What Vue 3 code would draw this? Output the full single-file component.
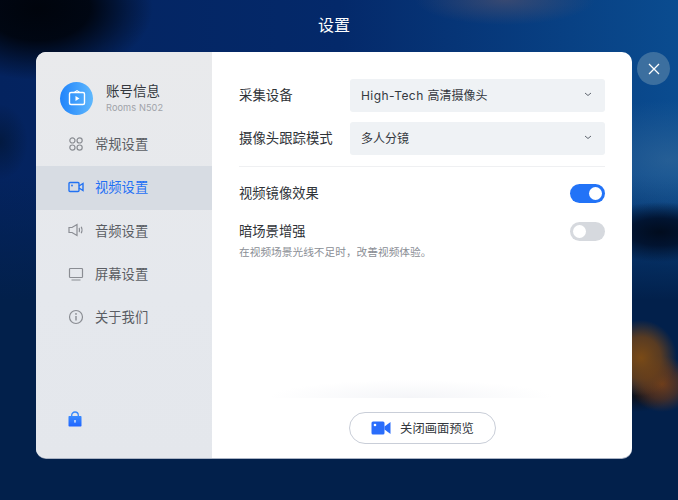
<script setup>
const nav = [
  { key: 'general', label: '常规设置' },
  { key: 'video', label: '视频设置', active: true },
  { key: 'audio', label: '音频设置' },
  { key: 'screen', label: '屏幕设置' },
  { key: 'about', label: '关于我们' }
]
</script>

<template>
  <div class="page">
    <div class="bg"></div>
    <header class="title">设置</header>
    <section class="card">
      <aside class="side">
        <div class="account">
          <div class="avatar">
            <svg width="20" height="20" viewBox="0 0 20 20" fill="none">
              <rect x="2.5" y="4.5" width="15" height="12" rx="1.5" stroke="#fff" stroke-width="1.4" />
              <path d="M7.5 4.2 10 2.6l2.5 1.6" stroke="#fff" stroke-width="1.2" />
              <path d="M8.5 8v5l4-2.5z" fill="#fff" />
            </svg>
          </div>
          <div class="account-text">
            <div class="account-name">账号信息</div>
            <div class="account-sub">Rooms N502</div>
          </div>
        </div>
        <nav class="nav">
          <div v-for="item in nav" :key="item.key" class="nav-item" :class="{ active: item.active }">
            <svg class="nav-icon" width="16" height="16" viewBox="0 0 16 16" fill="none" stroke="currentColor" stroke-width="1.2">
              <template v-if="item.key === 'general'">
                <circle cx="4.4" cy="4.4" r="2.6" />
                <circle cx="11.6" cy="4.4" r="2.6" />
                <circle cx="4.4" cy="11.6" r="2.6" />
                <circle cx="11.6" cy="11.6" r="2.6" />
              </template>
              <template v-else-if="item.key === 'video'">
                <rect x="1" y="3.5" width="10" height="9" rx="1" stroke-width="1.4" />
                <path d="M11 7l4-2.5v7L11 9" stroke-width="1.4" />
                <circle cx="4" cy="6.5" r="0.9" fill="currentColor" stroke="none" />
              </template>
              <template v-else-if="item.key === 'audio'">
                <path d="M1 5.5h3L9 2.5v11L4 10.5H1z" />
                <path d="M11 6c.6.6.6 3.400 0 4M13.200 4.800c1 1.600 1 4.800 0 6.400" />
              </template>
              <template v-else-if="item.key === 'screen'">
                <rect x="1.500" y="2.500" width="13" height="9" rx="0.8" />
                <path d="M3.500 14h9" />
              </template>
              <template v-else>
                <circle cx="8" cy="8" r="6.500" />
                <path d="M8 7v4.500" stroke-width="1.400" />
                <circle cx="8" cy="4.900" r="0.900" fill="currentColor" stroke="none" />
              </template>
            </svg>
            <span>{{ item.label }}</span>
          </div>
        </nav>
        <div class="lock">
          <svg width="14" height="16" viewBox="0 0 14 16">
            <defs>
              <linearGradient id="lockFill" x1="0" y1="0" x2="0" y2="1">
                <stop offset="0" stop-color="#3a8bff" />
                <stop offset="1" stop-color="#1f64ff" />
              </linearGradient>
            </defs>
            <path d="M3.700 6V4.300a3.300 3.300 0 0 1 6.600 0V6" fill="none" stroke="#3588fb" stroke-width="1.300" />
            <rect x="0.500" y="5" width="13" height="10.500" rx="0.800" fill="url(#lockFill)" />
            <rect x="6.400" y="9" width="1.200" height="2.600" fill="#fff" />
          </svg>
        </div>
      </aside>
      <main class="main">
        <div class="form-row">
          <label>采集设备</label>
          <div class="select">
            <span><span class="latin">High-Tech </span>高清摄像头</span>
            <svg width="8" height="5" viewBox="0 0 8 5" fill="none"><path d="M1 1l3 2.500L7 1" stroke="#5f666f" stroke-width="1" /></svg>
          </div>
        </div>
        <div class="form-row second">
          <label>摄像头跟踪模式</label>
          <div class="select">
            <span>多人分镜</span>
            <svg width="8" height="5" viewBox="0 0 8 5" fill="none"><path d="M1 1l3 2.500L7 1" stroke="#5f666f" stroke-width="1" /></svg>
          </div>
        </div>
        <div class="divider"></div>
        <div class="toggle-row">
          <span>视频镜像效果</span>
          <div class="toggle on"><i></i></div>
        </div>
        <div class="toggle-row dark">
          <span>暗场景增强</span>
          <div class="toggle"><i></i></div>
        </div>
        <p class="hint">在视频场景光线不足时，改善视频体验。</p>
        <div class="footer">
          <div class="fade"></div>
          <button class="preview" type="button">
            <svg width="20" height="14" viewBox="0 0 20 14">
              <rect x="0.500" y="0.500" width="13" height="13" rx="1.500" fill="#2a6dfb" />
              <path d="M13.500 5.500 19.500 1v12l-6-4.500z" fill="#2a6dfb" />
              <circle cx="4" cy="4" r="1.300" fill="#fff" />
            </svg>
            <span>关闭画面预览</span>
          </button>
        </div>
      </main>
    </section>
    <button class="close" type="button" aria-label="关闭">
      <svg width="12" height="12" viewBox="0 0 12 12" fill="none"><path d="M1 1l10 10M11 1 1 11" stroke="#fff" stroke-width="1.300" /></svg>
    </button>
  </div>
</template>

<style>
html, body { margin: 0; background: #02204b; }
</style>

<style scoped>
.page {
  position: relative;
  width: 678px;
  height: 500px;
  overflow: hidden;
  font-family: Inter, "Noto Sans CJK SC", sans-serif;
  color: #2b2f36;
}
.bg {
  position: absolute;
  inset: 0;
  background:
    radial-gradient(ellipse 115px 72px at 38px 8px, rgba(0, 4, 12, 1) 0%, rgba(0, 4, 12, .92) 45%, rgba(0, 4, 12, .35) 78%, rgba(0, 4, 12, 0) 100%),
    radial-gradient(ellipse 28px 38px at 0 142px, rgba(2, 18, 40, .55), rgba(2, 18, 40, 0)),
    radial-gradient(ellipse 36px 38px at 641px 358px, rgba(122, 74, 22, 1) 0%, rgba(110, 66, 24, .8) 55%, rgba(105, 62, 24, 0) 100%),
    radial-gradient(ellipse 32px 28px at 662px 384px, rgba(122, 64, 22, .9) 0%, rgba(105, 55, 24, .6) 55%, rgba(105, 55, 24, 0) 100%),
    radial-gradient(ellipse 34px 16px at 636px 396px, rgba(12, 14, 22, .9), rgba(12, 14, 22, 0)),
    radial-gradient(ellipse 70px 30px at 660px 232px, rgba(1, 12, 30, 1) 0%, rgba(1, 16, 42, .9) 45%, rgba(1, 20, 55, 0) 100%),
    radial-gradient(ellipse 110px 60px at 670px 160px, rgba(60, 110, 155, .55), rgba(60, 110, 155, 0)),
    radial-gradient(ellipse 90px 25px at 505px 0, rgba(95, 85, 105, .55), rgba(95, 85, 105, 0)),
    linear-gradient(180deg, rgba(2, 32, 75, 0) 0%, rgba(2, 32, 75, 0) 35%, #02204b 60%, #02204b 100%),
    linear-gradient(90deg, #04235f 0%, #04296a 50%, #0a4c90 100%);
}
.title {
  position: relative;
  height: 52px;
  padding-right: 10px;
  line-height: 51px;
  text-align: center;
  font-size: 16px;
  color: #fff;
}
.card {
  position: relative;
  display: flex;
  width: 596px;
  height: 406px;
  margin-left: 36px;
  border-radius: 10px;
  overflow: hidden;
  background: #fff;
  box-shadow: 0 1px 0 #aab3c4;
}
.side {
  display: flex;
  flex-direction: column;
  flex: 0 0 176px;
  background: linear-gradient(180deg, #e9eaec 0%, #e5e8ed 60%, #e4e7ec 100%);
}
.account {
  display: flex;
  align-items: center;
  height: 71px;
  padding: 19px 0 0 24px;
  box-sizing: border-box;
}
.avatar {
  display: flex;
  align-items: center;
  justify-content: center;
  width: 33px;
  height: 33px;
  margin-top: 2px;
  border-radius: 50%;
  background: linear-gradient(90deg, #2184fb 0%, #5fb8fd 100%);
}
.account-text { margin-left: 13px; }
.account-name {
  font-size: 13.500px;
  line-height: 20px;
  color: #33373d;
}
.account-sub {
  font-size: 9.200px;
  line-height: 13px;
  color: #a0a3a9;
  letter-spacing: .1px;
}
.nav { display: flex; flex-direction: column; }
.nav-item {
  display: flex;
  align-items: center;
  box-sizing: border-box;
  height: 43.300px;
  padding: 0 0 2px 32px;
  font-size: 13.300px;
  color: #5a5d63;
}
.nav-icon { color: #8a8d93; margin-right: 11px; flex: none; }
.nav-item.active {
  background: #d7dce3;
  color: #1f70f5;
}
.nav-item.active .nav-icon { color: #2272f2; }
.lock {
  margin-top: auto;
  padding: 0 0 31px 32px;
  line-height: 0;
}
.main {
  display: flex;
  flex-direction: column;
  flex: 1;
  padding: 27px 27px 0;
  min-width: 0;
}
.form-row {
  display: flex;
  align-items: center;
  justify-content: space-between;
  font-size: 13.400px;
  color: #2f3338;
}
.form-row label { padding-bottom: 2px; }
.form-row.second { margin-top: 10.500px; }
.select {
  display: flex;
  align-items: center;
  justify-content: space-between;
  box-sizing: border-box;
  width: 255px;
  height: 32.500px;
  padding: 0 13px 1px 11px;
  border-radius: 3px;
  background: #eff2f5;
  font-size: 12px;
  color: #34383e;
}
.latin { letter-spacing: .45px; }
.divider {
  height: 1px;
  margin-top: 11px;
  background: #eff0f2;
}
.toggle-row {
  display: flex;
  align-items: center;
  justify-content: space-between;
  height: 20px;
  margin-top: 16.500px;
  font-size: 13.300px;
  color: #2f3338;
}
.toggle-row span { padding-bottom: 2px; }
.toggle-row.dark { margin-top: 18px; }
.toggle {
  position: relative;
  width: 35px;
  height: 19px;
  border-radius: 10px;
  background: #d6d9de;
}
.toggle i {
  position: absolute;
  top: 3px;
  left: 3px;
  width: 13px;
  height: 13px;
  border-radius: 50%;
  background: #fff;
}
.toggle.on { background: #2273f7; }
.toggle.on i { left: 19px; }
.hint {
  margin: 4px 0 0;
  font-size: 10.700px;
  line-height: 16px;
  color: #8a8e95;
}
.footer {
  position: relative;
  display: flex;
  justify-content: center;
  margin-top: auto;
  padding-bottom: 14px;
}
.fade {
  position: absolute;
  left: 8%;
  right: 14%;
  top: -32px;
  height: 18px;
  background: radial-gradient(ellipse 50% 100% at 50% 100%, #f4f5f8 0%, rgba(246, 247, 250, 0) 100%);
}
.preview {
  display: flex;
  align-items: center;
  justify-content: center;
  box-sizing: border-box;
  width: 147px;
  height: 32px;
  padding: 0 0 0 1px;
  border: 1px solid #c9ced8;
  border-radius: 16px;
  background: #fff;
  font-family: inherit;
  font-size: 12.300px;
  color: #33373d;
}
.preview span { margin-left: 9px; }
.close {
  position: absolute;
  left: 637px;
  top: 52px;
  display: flex;
  align-items: center;
  justify-content: center;
  width: 33px;
  height: 33px;
  padding: 0;
  border: 0;
  border-radius: 50%;
  background: #3c6f9f;
}
</style>
